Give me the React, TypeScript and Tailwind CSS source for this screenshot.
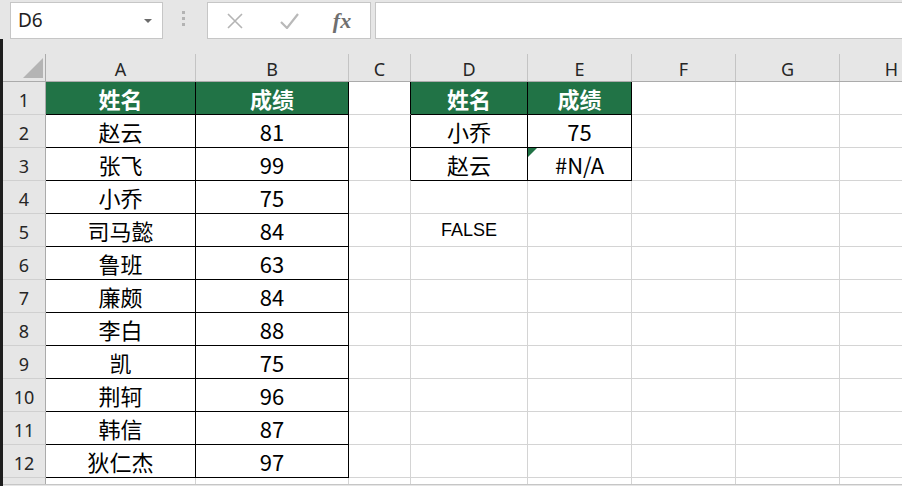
import React from 'react';

const COLS = ['A', 'B', 'C', 'D', 'E', 'F', 'G', 'H'];

// sheet contents keyed by "row-col" (col index 0 = A)
const CELLS: Record<string, string> = {
  '1-0': '姓名',
  '1-1': '成绩',
  '1-3': '姓名',
  '1-4': '成绩',
  '2-3': '小乔',
  '2-4': '75',
  '3-3': '赵云',
  '3-4': '#N/A',
  '5-3': 'FALSE',
};

const names = ['赵云', '张飞', '小乔', '司马懿', '鲁班', '廉颇', '李白', '凯', '荆轲', '韩信', '狄仁杰'];
const scores = ['81', '99', '75', '84', '63', '84', '88', '75', '96', '87', '97'];
names.forEach((n, i) => {
  CELLS[`${i + 2}-0`] = n;
  CELLS[`${i + 2}-1`] = scores[i];
});

function inTable(r: number, c: number) {
  if (r >= 1 && r <= 12 && (c === 0 || c === 1)) return true;
  if (r >= 1 && r <= 3 && (c === 3 || c === 4)) return true;
  return false;
}

function Cell({ r, c }: { r: number; c: number }) {
  const text = CELLS[`${r}-${c}`];
  const right = inTable(r, c) || inTable(r, c + 1);
  const bottom = inTable(r, c) || inTable(r + 1, c);
  const head = r === 1 && inTable(r, c);
  const isFalse = text === 'FALSE';

  return (
    <div
      className={[
        'relative flex items-center justify-center overflow-hidden border-r border-b leading-none',
        right ? 'border-r-black' : 'border-r-[#d4d4d4]',
        bottom ? 'border-b-black' : 'border-b-[#d4d4d4]',
        head ? 'bg-[#217346] font-bold text-white' : 'bg-white text-black',
        isFalse
          ? "font-['Liberation_Sans',sans-serif] text-[18px]"
          : "font-['Noto_Sans_CJK_SC',sans-serif] text-[22px]",
      ].join(' ')}
    >
      {r === 3 && c === 4 && (
        <svg className="absolute left-0 top-0" width="9" height="9" viewBox="0 0 9 9">
          <polygon points="0,0 9,0 0,9" fill="#217346" />
        </svg>
      )}
      {text}
    </div>
  );
}

function FormulaBar() {
  return (
    <div className="flex h-[39px] items-start bg-[#e6e6e6] pt-[2px]">
      <div className="ml-[10px] flex h-[37px] w-[153px] items-center justify-between border border-[#c6c6c6] bg-white pl-[7px] pr-[10px]">
        <span className="font-['Noto_Sans',sans-serif] text-[19px] text-[#1f1f1f]">D6</span>
        <svg width="8" height="4" viewBox="0 0 8 4">
          <polygon points="0,0 8,0 4,4" fill="#6b6b6b" />
        </svg>
      </div>
      <div className="ml-[19px] mt-[9px] flex flex-col gap-[3px]">
        <div className="h-[3px] w-[3px] bg-[#b3b3b3]" />
        <div className="h-[3px] w-[3px] bg-[#b3b3b3]" />
        <div className="h-[3px] w-[3px] bg-[#b3b3b3]" />
      </div>
      <div className="ml-[22px] flex h-[37px] w-[164px] items-center border border-[#c6c6c6] bg-white">
        <div className="flex w-[54px] justify-center">
          <svg width="16" height="16" viewBox="0 0 16 16">
            <path d="M1 1 L15 15 M15 1 L1 15" stroke="#b4b4b4" strokeWidth="1.6" fill="none" />
          </svg>
        </div>
        <div className="flex w-[54px] justify-center">
          <svg width="19" height="16" viewBox="0 0 19 16">
            <path d="M1 9 L7 15 L18 1" stroke="#b9b9b9" strokeWidth="2.2" fill="none" />
          </svg>
        </div>
        <div className="flex w-[54px] justify-center pr-[2px]">
          <span className="font-['Liberation_Serif',serif] text-[22px] font-bold italic leading-none text-[#6f6f6f]">
            fx
          </span>
        </div>
      </div>
      <div className="ml-[4px] h-[37px] flex-1 border-y border-l border-[#c6c6c6] bg-white" />
    </div>
  );
}

export default function App() {
  const rows = Array.from({ length: 12 }, (_, i) => i + 1);

  return (
    <div className="h-[486px] w-[902px] overflow-hidden bg-[#e6e6e6]">
      <FormulaBar />
      <div className="overflow-hidden border-l-[3px] border-l-[#1e1e1e]">
        <div className="grid w-[941px] grid-cols-[43px_150px_153px_62px_117px_104px_104px_104px_104px] grid-rows-[43px_repeat(12,33px)_6px]">
          {/* corner */}
          <div className="flex flex-col justify-end border-b border-b-[#ababab] bg-[#e6e6e6]">
            <div className="flex h-[27px] items-end justify-end border-r border-r-[#ababab] pb-[3px] pr-[2px]">
              <svg width="20" height="20" viewBox="0 0 20 20">
                <polygon points="20,0 20,20 0,20" fill="#b4b4b4" />
              </svg>
            </div>
          </div>
          {/* column headers */}
          {COLS.map((k) => (
            <div key={k} className="flex flex-col justify-end border-b border-b-[#ababab] bg-[#e6e6e6]">
              <div className="flex h-[27px] items-center justify-center border-r border-r-[#c4c4c4] pt-[3px] font-['Noto_Sans',sans-serif] text-[18px] leading-none text-[#262626]">
                {k}
              </div>
            </div>
          ))}
          {rows.map((r) => (
            <React.Fragment key={r}>
              <div className="flex items-center justify-center border-r border-b border-r-[#ababab] border-b-[#d0d0d0] bg-[#e6e6e6] pt-[4px] font-['Noto_Sans',sans-serif] text-[18px] leading-none text-[#262626]">
                {r}
              </div>
              {COLS.map((_, c) => (
                <Cell key={c} r={r} c={c} />
              ))}
            </React.Fragment>
          ))}
          {/* partial row 13 */}
          <div className="border-r border-r-[#ababab] bg-[#e6e6e6]" />
          {COLS.map((k) => (
            <div key={k} className="border-r border-r-[#d4d4d4] bg-white" />
          ))}
        </div>
        <div className="h-[3px] border-t border-t-[#c6c6c6] bg-[#e6e6e6]" />
      </div>
    </div>
  );
}
